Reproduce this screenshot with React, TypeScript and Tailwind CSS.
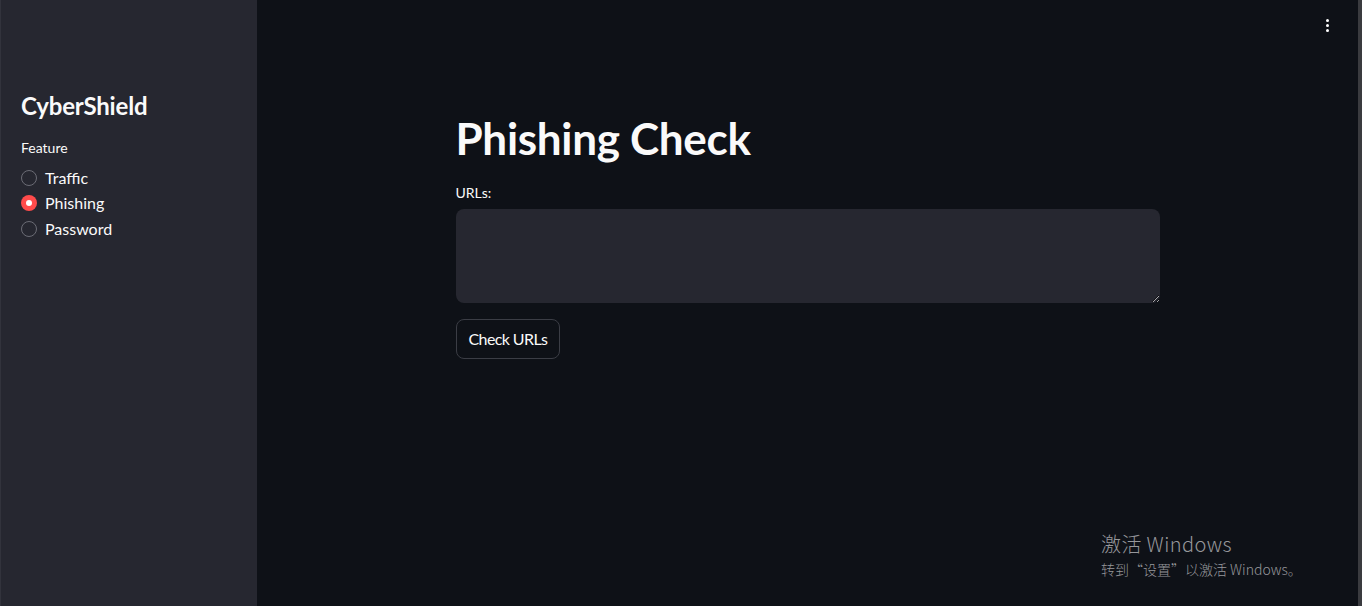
import React from "react";

const font = { fontFamily: '"Source Sans Pro", Lato, "Noto Sans", sans-serif' };

function Radio({ label, checked }: { label: string; checked?: boolean }) {
  return (
    <div className="flex items-center h-[25.5px]">
      {checked ? (
        <span className="w-4 h-4 rounded-full bg-[#ff4b4b] flex items-center justify-center">
          <span className="w-[6px] h-[6px] rounded-full bg-white" />
        </span>
      ) : (
        <span className="w-4 h-4 rounded-full border border-[#6b6c75]" />
      )}
      <span className="ml-2 text-[16px] text-[#fafafa]">{label}</span>
    </div>
  );
}

export default function App() {
  return (
    <div className="flex w-[1362px] h-[606px] bg-[#0e1117] overflow-hidden" style={font}>
      <aside className="w-[257px] h-full bg-[#262730] border-l border-[#32333c] px-5 pt-[88px] shrink-0">
        <div className="text-[24px] font-bold text-[#fafafa] leading-[36px] tracking-[-0.2px]">CyberShield</div>
        <div className="mt-[14px] text-[14px] text-[#fafafa] leading-[20px]">Feature</div>
        <div className="mt-[7px] flex flex-col">
          <Radio label="Traffic" />
          <Radio label="Phishing" checked />
          <Radio label="Password" />
        </div>
      </aside>
      <main className="relative flex-1 h-full flex justify-center">
        <div className="absolute right-[29px] top-[19px] flex flex-col gap-[2px]">
          <span className="w-[3px] h-[3px] rounded-full bg-white" />
          <span className="w-[3px] h-[3px] rounded-full bg-white" />
          <span className="w-[3px] h-[3px] rounded-full bg-white" />
        </div>
        <div className="w-[704px] pt-[110px]">
          <h1 className="text-[44px] font-bold text-[#fafafa] leading-[56px] tracking-[-0.3px]">Phishing Check</h1>
          <div className="mt-[17px] text-[14px] text-[#fafafa] leading-[20px]">URLs:</div>
          <textarea className="mt-[6px] block w-full h-[94px] bg-[#262730] rounded-lg outline-none resize-y text-[#fafafa] p-3" />
          <button className="mt-[16px] h-[40px] px-[12px] rounded-lg border border-[#3b3d45] bg-[#0e1117] text-[16px] text-[#fafafa] tracking-[-0.6px]">
            Check URLs
          </button>
        </div>
        <div
          className="absolute left-[844px] top-[530px] text-[#96979b]"
          style={{ fontFamily: '"Noto Sans CJK SC", "Noto Sans", sans-serif' }}
        >
          <div className="text-[20px] leading-[28px] font-light tracking-[0.4px]">激活 Windows</div>
          <div className="text-[14px] leading-[20px] mt-[1px] font-light">转到“设置”以激活 Windows。</div>
        </div>
      </main>
      <div className="w-[4px] h-full bg-[#3a3b3f] shrink-0" />
    </div>
  );
}
